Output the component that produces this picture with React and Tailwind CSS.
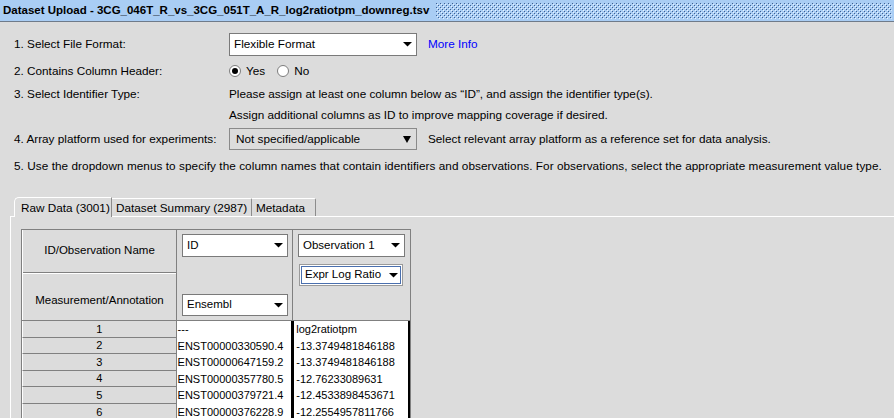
import React from 'react';

const rows = [
  ['1', '---', 'log2ratiotpm'],
  ['2', 'ENST00000330590.4', '-13.3749481846188'],
  ['3', 'ENST00000647159.2', '-13.3749481846188'],
  ['4', 'ENST00000357780.5', '-12.76233089631'],
  ['5', 'ENST00000379721.4', '-12.4533898453671'],
  ['6', 'ENST00000376228.9', '-12.2554957811766'],
];

// small flat arrow used in the white combo boxes
const SmallArrow = () => (
  <svg width="9" height="5" viewBox="0 0 9 5" className="shrink-0">
    <path d="M0 0 H9 L4.5 4.5 Z" fill="#000" />
  </svg>
);

const Combo = ({ text, className = '' }) => (
  <div className={`flex items-center justify-between bg-white border border-[#7a7a7a] pl-[4px] pr-[4px] ${className}`}>
    <span>{text}</span>
    <SmallArrow />
  </div>
);

const Radio = ({ checked }) => (
  <span className="w-[12px] h-[12px] rounded-full border border-[#7d7d7d] bg-white flex items-center justify-center">
    {checked && <span className="w-[6px] h-[6px] rounded-full bg-black" />}
  </span>
);

// dotted texture in the title bar
const Dots = () => (
  <svg className="w-full h-full" xmlns="http://www.w3.org/2000/svg">
    <defs>
      <pattern id="dots" width="4" height="4" patternUnits="userSpaceOnUse">
        <rect x="0" y="0" width="1" height="1" fill="#3d5f92" />
        <rect x="2" y="2" width="1" height="1" fill="#3d5f92" />
        <rect x="1" y="1" width="1" height="1" fill="#e8f3ff" />
        <rect x="3" y="3" width="1" height="1" fill="#e8f3ff" />
      </pattern>
    </defs>
    <rect width="100%" height="100%" fill="url(#dots)" />
  </svg>
);

export default function App() {
  return (
    <div className="w-[894px] h-[418px] overflow-hidden bg-[#dcdcdc] text-black text-[11.75px] font-['Liberation_Sans',sans-serif]">
      {/* title bar */}
      <div className="h-[22px] flex items-center bg-[#a9cdf4] border-b border-[#6f7b8a]">
        <span className="pl-[3px] font-bold text-[11.5px] whitespace-nowrap">
          Dataset Upload - 3CG_046T_R_vs_3CG_051T_A_R_log2ratiotpm_downreg.tsv
        </span>
        <div className="ml-[7px] mr-[2px] h-[16px] flex-1">
          <Dots />
        </div>
      </div>

      {/* form rows */}
      <div className="pl-[14px] pt-[9px]">
        <div className="flex items-center h-[26px]">
          <div className="w-[215px]">1. Select File Format:</div>
          <Combo text="Flexible Format" className="w-[188px] h-[23px]" />
          <span className="ml-[11px] text-[#0000ff]">More Info</span>
        </div>
        <div className="flex items-center h-[28px]">
          <div className="w-[215px]">2. Contains Column Header:</div>
          <Radio checked />
          <span className="ml-[5px]">Yes</span>
          <span className="ml-[12px]"><Radio /></span>
          <span className="ml-[5px]">No</span>
        </div>
        <div className="flex items-center h-[18px]">
          <div className="w-[215px]">3. Select Identifier Type:</div>
          <span>Please assign at least one column below as “ID”, and assign the identifier type(s).</span>
        </div>
        <div className="flex items-center h-[24px]">
          <div className="w-[215px]" />
          <span>Assign additional columns as ID to improve mapping coverage if desired.</span>
        </div>
        <div className="flex items-center h-[24px]">
          <div className="w-[215px]">4. Array platform used for experiments:</div>
          <div className="w-[188px] h-[22px] flex items-center justify-between border border-[#8a8a8a] pl-[6px] pr-[5px]">
            <span>Not specified/applicable</span>
            <svg width="8" height="7" viewBox="0 0 8 7"><path d="M0 0 H8 L4 7 Z" fill="#000" /></svg>
          </div>
          <span className="ml-[11px]">Select relevant array platform as a reference set for data analysis.</span>
        </div>
        <div className="flex items-center h-[30px] whitespace-nowrap tracking-[0.06px]">
          5. Use the dropdown menus to specify the column names that contain identifiers and observations. For observations, select the appropriate measurement value type.
        </div>
      </div>

      {/* tabs */}
      <div className="mt-[15px] ml-[14px] flex items-end h-[20px] relative z-10">
        <div className="w-[98px] h-[20px] -mb-px bg-[#dcdcdc] border-l border-t border-white border-r border-r-[#8c8c8c] rounded-tl-[5px] pl-[6px] flex items-center">
          Raw Data (3001)
        </div>
        <div className="w-[140px] h-[18px] border-t border-white border-r border-r-[#8c8c8c] rounded-tr-[2px] pl-[4px] flex items-center">
          Dataset Summary (2987)
        </div>
        <div className="w-[64px] h-[18px] border-t border-white border-r border-r-[#8c8c8c] rounded-tr-[2px] pl-[4px] flex items-center">
          Metadata
        </div>
      </div>

      {/* panel */}
      <div className="ml-[10px] border-l border-t border-white pt-[12px] pl-[10px] h-[220px]">
        <div className="w-[390px] border border-[#808080] bg-[#dcdcdc]">
          {/* header */}
          <div className="flex h-[90px] text-[11.5px]">
            <div className="w-[155px] border-r border-[#808080] border-l border-l-white flex flex-col">
              <div className="h-[43px] flex items-center justify-center border-b border-[#808080]">ID/Observation Name</div>
              <div className="flex-1 flex items-center justify-center pt-[8px] border-t border-white">Measurement/Annotation</div>
            </div>
            <div className="w-[116px] border-r border-[#808080] flex flex-col justify-between px-[5px] pt-[4px] pb-[4px]">
              <Combo text="ID" className="w-[106px] h-[23px]" />
              <Combo text="Ensembl" className="w-[106px] h-[22px]" />
            </div>
            <div className="w-[117px] flex flex-col pt-[4px] pl-[5px]">
              <Combo text="Observation 1" className="w-[107px] h-[23px]" />
              <div className="mt-[7px] ml-[1px] w-[104px] h-[22px] border border-[#9a9a9a] bg-white p-[1px]">
                <div className="h-full border border-[#4a6fae] flex items-center justify-between pl-[3px] pr-[2px]">
                  <span>Expr Log Ratio</span>
                  <SmallArrow />
                </div>
              </div>
            </div>
          </div>
          {/* data rows */}
          <div className="border-t border-[#808080] text-[11px]">
            {rows.map(([n, id, val]) => (
              <div key={n} className="flex h-[16.6px]">
                <div className="w-[155px] border-r border-b border-[#808080] border-l border-l-white flex items-center justify-center">{n}</div>
                <div className="w-[115px] bg-white flex items-center pl-[1px] whitespace-nowrap">{id}</div>
                <div className="w-[119px] bg-white border-l-[3px] border-r-[2px] border-black flex items-center pl-[2px] whitespace-nowrap">{val}</div>
              </div>
            ))}
          </div>
        </div>
      </div>
    </div>
  );
}
